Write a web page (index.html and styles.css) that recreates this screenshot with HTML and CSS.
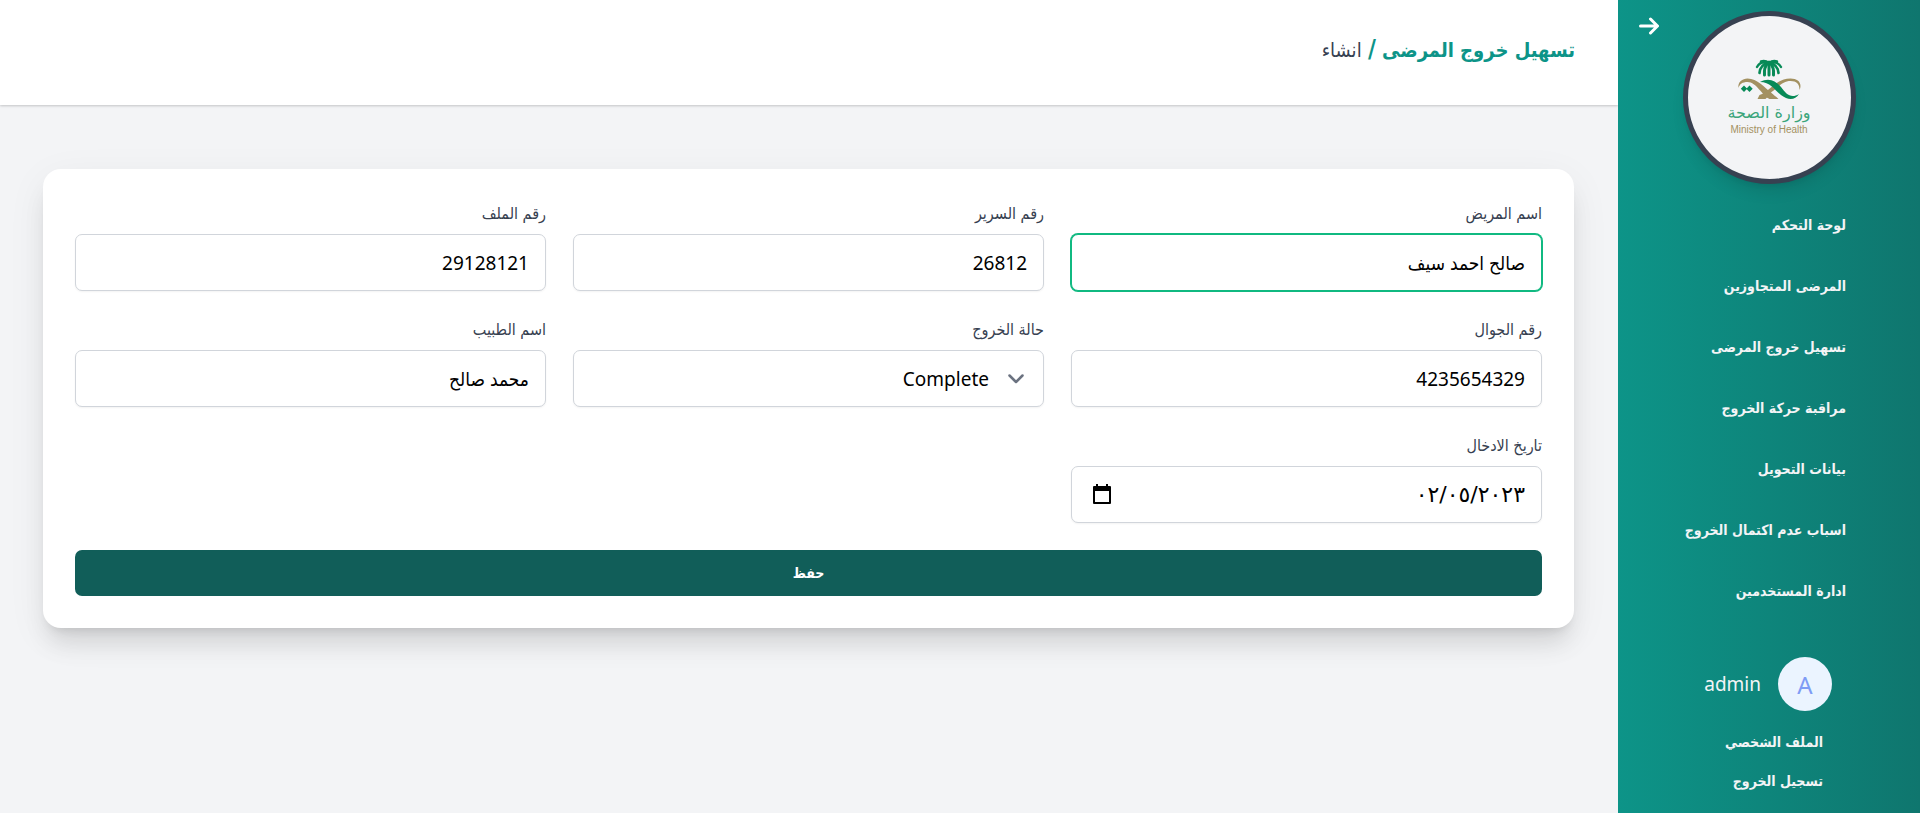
FILE: index.html
```html
<!DOCTYPE html>
<html lang="ar" dir="rtl">
<head>
  <meta charset="UTF-8" />
  <meta name="viewport" content="width=device-width, initial-scale=1.0"/>
  <title>تسهيل خروج المرضى</title>
  <link rel="stylesheet" href="styles.css">
</head>
<body>

<aside class="sidebar">
  <button type="button" class="toggle" aria-label="إغلاق القائمة">
    <svg viewBox="0 0 20 18" width="20" height="18" fill="none" stroke="currentColor" stroke-width="3" stroke-linecap="round" stroke-linejoin="round">
      <path d="M1.5 9H18M11.5 2l7 7-7 7"/>
    </svg>
  </button>

  <a href="#" class="logo" aria-label="وزارة الصحة">
    <svg viewBox="0 0 84 78" width="84" height="78">
      <!-- palm -->
      <g fill="none" stroke="#078a57" stroke-linecap="round">
        <path stroke-width="3" d="M42 3v13"/>
        <path stroke-width="3" d="M41 4c-3 3-4 7-3.500 12M43 4c3 3 4 7 3.500 12"/>
        <path stroke-width="2.600" d="M41 4c-5 1-8 5-8.500 10M43 4c5 1 8 5 8.500 10"/>
        <path stroke-width="2.400" d="M40 3.500c-5-1-8 1-10 4.500M44 3.500c5-1 8 1 10 4.500M34 2.500c3-1 6 0 8 1.500 2-1.500 5-2.500 8-1.500"/>
      </g>
      <!-- swords -->
      <path fill="#a39161" d="M11.500 29c-1-6 4-9.500 9-9.500 10 0 17 9 24 14.500 2 2 4 3 7 6h-9c-7-3-13-17-22-17-5 0-8 2-9 6z"/>
      <path fill="#a39161" d="M72.500 31c0-6-3-9-9-9-8 0-13 7-19 11-2 3-4 5-6 7h-8l2-4c10-3 16-16.500 31-16.500 8 0 12 5 9 11.500z"/>
      <path fill="#078a57" d="M33 23c9-5 16-1 21 5 5 7 10 12 18 7-3 5-8 6-13 4-10-4-13-16-26-16z"/>
      <path fill="#078a57" d="M17 26.500l3.200 3.200L17 32.900l-3.200-3.200zM22.500 26.500l3.200 3.200-3.200 3.200-3.200-3.200z"/>
      <text class="logo-ar" x="42" y="59" text-anchor="middle">وزارة الصحة</text>
      <text class="logo-en" x="42" y="74" text-anchor="middle">Ministry of Health</text>
    </svg>
  </a>

  <nav class="menu">
    <a href="#">لوحة التحكم</a>
    <a href="#">المرضى المتجاوزين</a>
    <a href="#">تسهيل خروج المرضى</a>
    <a href="#">مراقبة حركة الخروج</a>
    <a href="#">بيانات التحويل</a>
    <a href="#">اسباب عدم اكتمال الخروج</a>
    <a href="#">ادارة المستخدمين</a>
  </nav>

  <div class="user">
    <span class="avatar">A</span>
    <span class="user-name">admin</span>
  </div>
  <div class="user-links">
    <a href="#">الملف الشخصي</a>
    <a href="#">تسجيل الخروج</a>
  </div>
</aside>

<div class="page">
  <header class="page-header">
    <h1><a href="#">تسهيل خروج المرضى</a> <span class="slash">/</span> <span class="current">انشاء</span></h1>
  </header>

  <main>
    <form class="card">
      <div class="fields">
        <div class="field">
          <label for="name">اسم المريض</label>
          <input class="control active" type="text" id="name" value="صالح احمد سيف">
        </div>
        <div class="field">
          <label for="bed">رقم السرير</label>
          <input class="control" type="text" id="bed" value="26812">
        </div>
        <div class="field">
          <label for="file">رقم الملف</label>
          <input class="control" type="text" id="file" value="29128121">
        </div>
        <div class="field">
          <label for="phone">رقم الجوال</label>
          <input class="control" type="text" id="phone" value="4235654329">
        </div>
        <div class="field">
          <label for="status">حالة الخروج</label>
          <div class="control-wrap">
            <select class="control" id="status">
              <option selected>Complete</option>
            </select>
            <svg class="chevron" viewBox="0 0 18 12" width="18" height="12" fill="none" stroke="#6b7280" stroke-width="2.500" stroke-linecap="round" stroke-linejoin="round">
              <path d="M2.500 2.500L9 9l6.500-6.500"/>
            </svg>
          </div>
        </div>
        <div class="field">
          <label for="doctor">اسم الطبيب</label>
          <input class="control" type="text" id="doctor" value="محمد صالح">
        </div>
        <div class="field">
          <label for="date">تاريخ الادخال</label>
          <div class="control-wrap">
            <input class="control date" type="text" id="date" value="٠٢/٠٥/٢٠٢٣">
            <button type="button" class="calendar" aria-label="اختر التاريخ">
              <svg viewBox="0 0 18 20" width="18" height="20">
                <path fill="#000" fill-rule="evenodd" d="M3 0h2v2h8V0h2v2h2a1 1 0 0 1 1 1v16a1 1 0 0 1-1 1H1a1 1 0 0 1-1-1V3a1 1 0 0 1 1-1h2zM2 7v11h14V7z"/>
              </svg>
            </button>
          </div>
        </div>
      </div>
      <button type="submit" class="save">حفظ</button>
    </form>
  </main>
</div>

</body>
</html>
```

FILE: styles.css
```css
* {
    margin: 0;
    padding: 0;
    box-sizing: border-box;
}

body {
    display: flex;
    min-height: 100vh;
    background-color: #f3f4f6;
    color: #374151;
    font-family: "Noto Sans", "DejaVu Sans", sans-serif;
    font-size: 18px;
}

a {
    color: inherit;
    text-decoration: none;
}

button {
    border: 0;
    background: none;
    font: inherit;
    cursor: pointer;
}

svg {
    display: block;
}

/* Sidebar */
.sidebar {
    position: relative;
    z-index: 1;
    flex: 0 0 302px;
    display: flex;
    flex-direction: column;
    padding-top: 11px;
    background: linear-gradient(to right, #0d9488, #0f766e);
    color: #f3f4f6;
    font-family: "DejaVu Sans Condensed", "DejaVu Sans", sans-serif;
    font-size: 14px;
    font-weight: bold;
}

.toggle {
    position: absolute;
    top: 17px;
    left: 21px;
    color: #fff;
}

.logo {
    align-self: center;
    display: flex;
    justify-content: center;
    align-items: center;
    width: 173px;
    height: 173px;
    border: 5px solid #374151;
    border-radius: 50%;
    background-color: #f3f4f6;
    box-shadow: 0 10px 15px -3px rgba(0, 0, 0, 0.1), 0 4px 6px -4px rgba(0, 0, 0, 0.1);
}

.logo-ar {
    fill: #3aa57b;
    font-family: "DejaVu Sans", sans-serif;
    font-size: 16px;
    font-weight: normal;
}

.logo-en {
    fill: #a39161;
    font-family: "Liberation Sans", sans-serif;
    font-size: 10px;
    font-weight: normal;
}

.menu {
    display: flex;
    flex-direction: column;
    gap: 37px;
    padding: 29px 74px 0 0;
    line-height: 24px;
    white-space: nowrap;
}

.user {
    display: flex;
    align-items: center;
    gap: 17px;
    padding: 54px 88px 0 0;
    font-family: "Noto Sans", sans-serif;
    font-size: 19px;
    font-weight: normal;
}

.avatar {
    display: flex;
    justify-content: center;
    align-items: center;
    width: 54px;
    height: 54px;
    border-radius: 50%;
    background-color: #ebf4ff;
    color: #7f9cf5;
    font-size: 24px;
}

.user-links {
    display: flex;
    flex-direction: column;
    gap: 15px;
    padding: 19px 97px 0 0;
    line-height: 24px;
}

/* Content */
.page {
    flex: 1;
    min-width: 0;
}

.page-header {
    padding: 30px 43px 34px;
    background-color: #fff;
    box-shadow: 0 1px 3px rgba(0, 0, 0, 0.1), 0 1px 2px rgba(0, 0, 0, 0.1);
}

.page-header h1 {
    color: #0d9488;
    font-family: "DejaVu Sans Condensed", "DejaVu Sans", sans-serif;
    font-size: 20px;
    line-height: 41px;
}

.page-header .slash {
    font-size: 24px;
    line-height: 1;
}

.page-header .current {
    color: #374151;
    font-weight: normal;
}

main {
    padding: 64px 44px 64px 43px;
}

.card {
    padding: 33px 32px 32px;
    border-radius: 18px;
    background-color: #fff;
    box-shadow: 0 20px 25px -5px rgba(0, 0, 0, 0.1), 0 8px 10px -6px rgba(0, 0, 0, 0.1), 0 10px 40px rgba(0, 0, 0, 0.06);
}

.fields {
    display: grid;
    grid-template-columns: repeat(3, 1fr);
    gap: 27px;
}

.field label {
    display: block;
    margin-bottom: 9px;
    font-family: "DejaVu Sans Condensed", "DejaVu Sans", sans-serif;
    font-size: 16px;
    line-height: 23px;
}

.control {
    display: block;
    width: 100%;
    height: 57px;
    padding: 0 16px;
    border: 1px solid #d1d5db;
    border-radius: 7px;
    outline: 0;
    background-color: #fff;
    box-shadow: 0 1px 2px rgba(0, 0, 0, 0.05);
    color: #000;
    font-family: "Noto Sans", "DejaVu Sans Condensed", "DejaVu Sans", sans-serif;
    font-size: 19px;
}

.control:focus,
.control.active {
    border-color: #10b981;
    box-shadow: 0 0 0 1px #10b981;
}

.control.date {
    font-family: "DejaVu Sans", sans-serif;
    font-size: 22px;
}

.control-wrap {
    position: relative;
}

select.control {
    padding-right: 54px;
    appearance: none;
}

.chevron {
    position: absolute;
    top: 23px;
    right: 19px;
    pointer-events: none;
}

.calendar {
    position: absolute;
    top: 18px;
    left: 22px;
}

.save {
    display: block;
    width: 100%;
    height: 46px;
    margin-top: 27px;
    border-radius: 7px;
    background-color: #115e59;
    color: #fff;
    font-family: "DejaVu Sans Condensed", "DejaVu Sans", sans-serif;
    font-size: 14px;
    font-weight: bold;
}
```
